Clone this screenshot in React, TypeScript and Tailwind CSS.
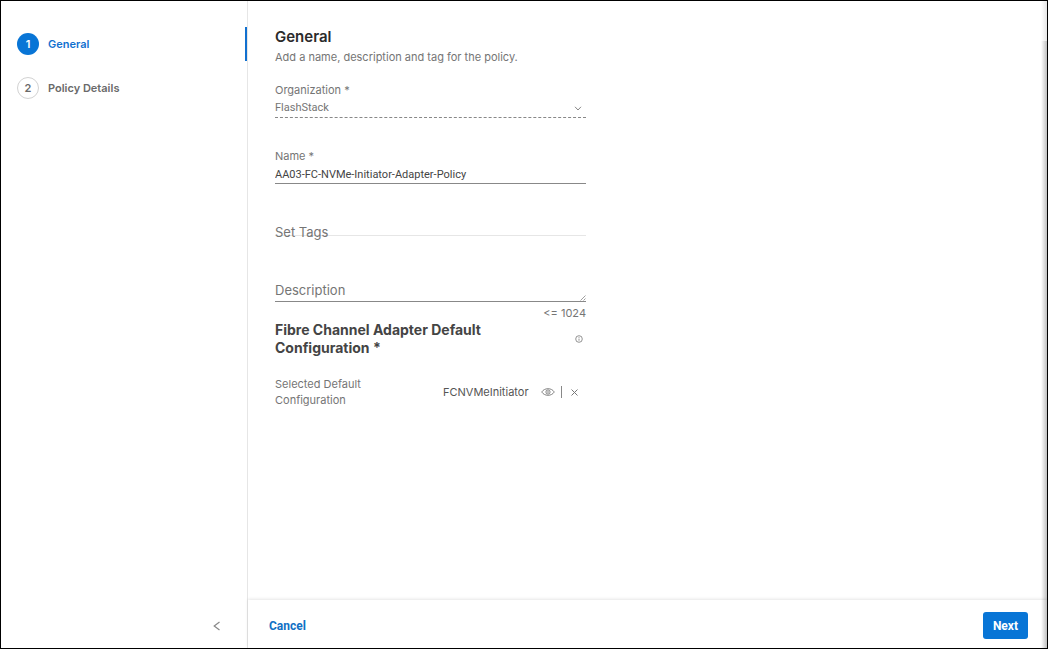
import { useState } from "react";

function Step({ number, label, active }: { number: number; label: string; active?: boolean }) {
  return (
    <li className={`flex h-[34px] items-center border-r-2 pl-4 ${active ? "border-[#1170cf]" : "border-transparent"}`}>
      <button type="button" aria-current={active ? "step" : undefined} className="flex items-center gap-[9px] text-[11px] font-semibold">
        <span
          className={`flex size-[22px] items-center justify-center rounded-full ${
            active ? "bg-[#0875d6] text-white" : "border border-[#d2d2d2] text-[#6a6a6a]"
          }`}
        >
          {number}
        </span>
        <span className={active ? "text-[#1170cf]" : "text-[#6a6a6a]"}>{label}</span>
      </button>
    </li>
  );
}

function ChevronDown() {
  return (
    <svg aria-hidden="true" viewBox="0 0 8 5" className="pointer-events-none absolute right-1 top-[7px] h-[5px] w-2" fill="none" stroke="#888" strokeWidth="1">
      <path d="M1 0.8 4 4l3-3.2" />
    </svg>
  );
}

export default function App() {
  const [name, setName] = useState("AA03-FC-NVMe-Initiator-Adapter-Policy");
  const [tags, setTags] = useState("");
  const [description, setDescription] = useState("");

  return (
    <div className="relative flex min-h-screen border border-black bg-white font-['Inter',sans-serif] text-[11px] text-[#757575]">
      <aside className="flex w-[247px] shrink-0 flex-col border-r border-[#e6e6e6] pt-[26px]">
        <nav aria-label="Policy steps">
          <ol className="flex flex-col gap-[10px]">
            <Step number={1} label="General" active />
            <Step number={2} label="Policy Details" />
          </ol>
        </nav>
        <button type="button" aria-label="Collapse sidebar" className="mt-auto mb-[17px] mr-[26px] self-end">
          <svg viewBox="0 0 8 10" className="h-[10px] w-2" fill="none" stroke="#888" strokeWidth="1.2">
            <path d="M6.5 1 1.2 5l5.3 4" />
          </svg>
        </button>
      </aside>

      <div className="flex min-w-0 flex-1 flex-col">
        <main className="flex-1 pl-[27px] pr-7 pt-[26px]">
          <div className="w-full max-w-[311px]">
            <h1 className="text-[15px] leading-5 font-semibold text-[#2b2b2b]">General</h1>
            <p className="mt-[2px] leading-4 whitespace-nowrap">Add a name, description and tag for the policy.</p>

            <div className="mt-[17px]">
              <label htmlFor="organization" className="block leading-4">Organization *</label>
              <div className="relative mt-[1px] border-b border-dashed border-[#888]">
                <select id="organization" className="block h-[18px] w-full appearance-none bg-transparent font-['Roboto',sans-serif] leading-4 outline-none">
                  <option>FlashStack</option>
                </select>
                <ChevronDown />
              </div>
            </div>

            <div className="mt-[30px]">
              <label htmlFor="name" className="block leading-4">Name *</label>
              <input
                id="name"
                value={name}
                onChange={(e) => setName(e.target.value)}
                className="mt-[1px] block h-[19px] w-full border-b border-[#888] bg-transparent font-['Roboto',sans-serif] text-[#444] outline-none"
              />
            </div>

            <div className="relative mt-8">
              <input
                id="tags"
                value={tags}
                onChange={(e) => setTags(e.target.value)}
                className="block h-5 w-full border-b border-[#e6e6e6] bg-transparent outline-none"
              />
              <label htmlFor="tags" className={`pointer-events-none absolute left-0 top-[6px] text-[13px] leading-5 ${tags ? "hidden" : ""}`}>
                Set Tags
              </label>
            </div>

            <div className="relative mt-[42px]">
              <textarea
                id="description"
                rows={1}
                value={description}
                onChange={(e) => setDescription(e.target.value)}
                className="block h-6 w-full resize-none overflow-hidden border-b border-[#888] bg-transparent text-[13px] leading-5 outline-none"
              />
              <label htmlFor="description" className={`pointer-events-none absolute left-0 top-[2px] text-[13px] leading-5 ${description ? "hidden" : ""}`}>
                Description
              </label>
              <svg aria-hidden="true" viewBox="0 0 6 6" className="pointer-events-none absolute right-0 bottom-[1px] size-[6px]" fill="none" stroke="#888" strokeWidth="0.8">
                <path d="M0.5 5.5 5.5 0.5M3.5 5.5l2-2" />
              </svg>
            </div>
            <p className="mt-[3px] text-right leading-4">&lt;= 1024</p>

            <div className="flex items-center justify-between">
              <h2 className="max-w-[240px] text-[14px] leading-[18px] font-bold text-[#444]">
                Fibre Channel Adapter Default Configuration *
              </h2>
              <button type="button" aria-label="Information" className="mr-[3px]">
                <svg viewBox="0 0 8 8" className="size-2" fill="none" stroke="#777" strokeWidth="0.8">
                  <circle cx="4" cy="4" r="3.3" />
                  <path d="M4 3.6v2.1M4 2.2v.8" />
                </svg>
              </button>
            </div>

            <div className="mt-[19px] flex items-center">
              <p className="w-[168px] pr-16 leading-4">Selected Default Configuration</p>
              <span className="text-[#555]">FCNVMeInitiator</span>
              <button type="button" aria-label="View configuration" className="ml-auto">
                <svg viewBox="0 0 14 8" className="h-2 w-[14px]" fill="none" stroke="#777" strokeWidth="0.9">
                  <path d="M0.7 4C2.2 1.8 4.4.7 7 .7S11.8 1.8 13.3 4C11.8 6.2 9.6 7.3 7 7.3S2.2 6.2.7 4Z" />
                  <circle cx="7" cy="4" r="2.1" />
                  <path d="M7 3v2" />
                </svg>
              </button>
              <span aria-hidden="true" className="ml-[6px] h-3 w-px bg-[#888]" />
              <button type="button" aria-label="Remove configuration" className="ml-[9px] mr-2">
                <svg viewBox="0 0 7 7" className="size-[7px]" fill="none" stroke="#777" strokeWidth="1">
                  <path d="m.5.5 6 6m0-6-6 6" />
                </svg>
              </button>
            </div>
          </div>
        </main>

        <footer className="flex h-12 items-center justify-between pt-[3px] pl-[21px] pr-[19px] shadow-[0_-1px_3px_rgba(0,0,0,0.1)] font-['Roboto',sans-serif] text-[12px] font-bold">
          <button type="button" className="text-[#1170c4]">Cancel</button>
          <button type="button" className="h-[27px] rounded-[3px] bg-[#0875d6] px-[10px] text-white">Next</button>
        </footer>
      </div>

      <div aria-hidden="true" className="pointer-events-none absolute inset-y-0 right-0 flex w-[6px] flex-col">
        <div className="h-10 bg-linear-to-r from-transparent to-black/10" />
        <div className="flex-1 bg-linear-to-r from-transparent to-black/25" />
      </div>
    </div>
  );
}
